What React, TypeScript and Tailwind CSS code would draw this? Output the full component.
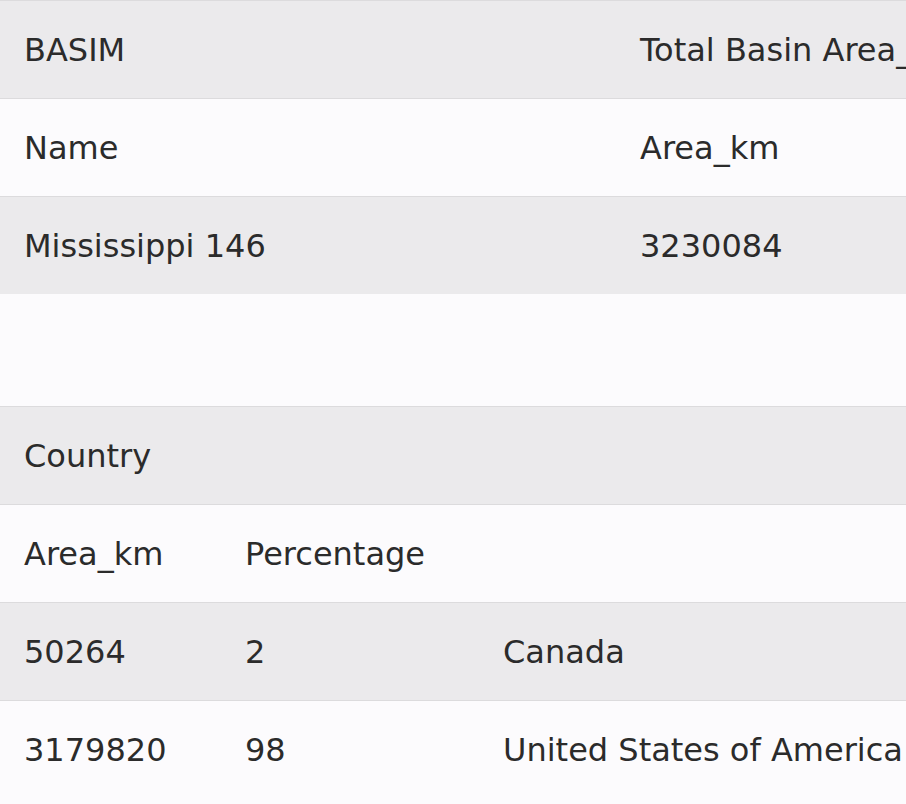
import React from "react";

type Row = { cells: string[]; shaded: boolean };

const basinRows: Row[] = [
	{ cells: ["BASIM", "Total Basin Area_km"], shaded: true },
	{ cells: ["Name", "Area_km"], shaded: false },
	{ cells: ["Mississippi 146", "3230084"], shaded: true },
];

const countryRows: Row[] = [
	{ cells: ["Country", "", ""], shaded: true },
	{ cells: ["Area_km", "Percentage", ""], shaded: false },
	{ cells: ["50264", "2", "Canada"], shaded: true },
	{ cells: ["3179820", "98", "United States of America"], shaded: false },
];

function DataTable({ rows, widths }: { rows: Row[]; widths: string[] }) {
	return (
		<div className="flex flex-col">
			{rows.map((row, i) => (
				<div
					key={i}
					className={`flex h-[98px] items-center border-t border-[#dcdbdd] ${
						row.shaded ? "bg-[#ebeaec]" : "bg-[#fcfbfd]"
					}`}
				>
					{row.cells.map((cell, j) => (
						<div key={j} className={`shrink-0 pl-6 ${widths[j]}`}>
							{cell}
						</div>
					))}
				</div>
			))}
		</div>
	);
}

export default function App() {
	return (
		<div
			className="min-h-[804px] w-[906px] overflow-hidden whitespace-nowrap bg-[#fcfbfd] text-[32px] leading-none text-[#2b2b2b]"
			style={{ fontFamily: '"DejaVu Sans", Verdana, sans-serif' }}
		>
			<DataTable rows={basinRows} widths={["w-[616px]", "w-[400px]"]} />
			<div className="h-[112px]" />
			<DataTable
				rows={countryRows}
				widths={["w-[221px]", "w-[258px]", "w-[500px]"]}
			/>
		</div>
	);
}
